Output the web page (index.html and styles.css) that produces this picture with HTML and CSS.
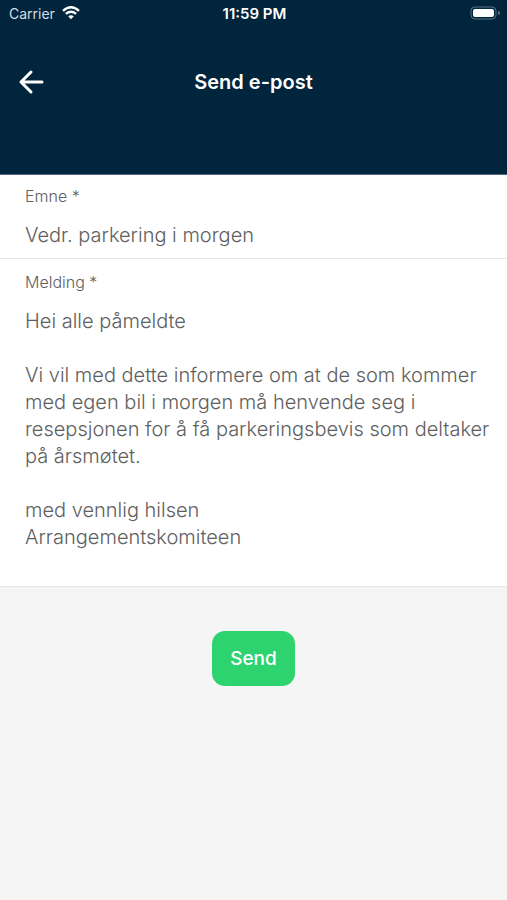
FILE: index.html
```html
<!DOCTYPE html>
<html lang="nb">
<head>
<meta charset="utf-8">
<meta name="viewport" content="width=device-width, initial-scale=1">
<title>Send e-post</title>
<link rel="stylesheet" href="styles.css">
</head>
<body>
<header class="header">
  <div class="status">
    <div class="status-left">
      <span>Carrier</span>
      <svg class="wifi" viewBox="0 0 18 14" aria-hidden="true">
        <path d="M1 4.8Q9-2.2 17 4.8M3.8 7.9Q9 3.6 14.2 7.9"/>
        <path class="wifi-dot" d="M6.2 10.3Q9 8.4 11.8 10.3L9 13.3Z"/>
      </svg>
    </div>
    <time class="clock">11:59 PM</time>
    <svg class="battery" viewBox="0 0 30 14" aria-hidden="true">
      <rect class="battery-case" x="1" y="1" width="25" height="12" rx="4"/>
      <rect class="battery-fill" x="3" y="3" width="21" height="8" rx="2"/>
      <path class="battery-tip" d="M28 5Q30 5 30 7Q30 9 28 9Z"/>
    </svg>
  </div>
  <nav class="navbar">
    <button class="back" type="button" aria-label="Tilbake">
      <svg viewBox="0 0 26 26" aria-hidden="true"><path d="M13 3L3 13L13 23M3 13H24"/></svg>
    </button>
    <h1 class="title">Send e-post</h1>
  </nav>
</header>
<main>
  <form class="form">
    <div class="field">
      <label class="label" for="subject">Emne *</label>
      <input class="control" id="subject" type="text" value="Vedr. parkering i morgen">
    </div>
    <div class="field field-message">
      <label class="label" for="message">Melding *</label>
      <textarea class="control message" id="message" rows="9">Hei alle påmeldte

Vi vil med dette informere om at de som kommer med egen bil i morgen må henvende seg i resepsjonen for å få parkeringsbevis som deltaker på årsmøtet.

med vennlig hilsen
Arrangementskomiteen</textarea>
    </div>
    <button class="send" type="button">Send</button>
  </form>
</main>
</body>
</html>
```
FILE: styles.css
```css
* {
  box-sizing: border-box;
}

body {
  margin: 0;
  min-height: 100vh;
  background: #f5f5f5;
  color: #606060;
  font-family: Inter, "Liberation Sans", sans-serif;
}

.header {
  padding-bottom: 64px;
  border-bottom: 1px solid #526581;
  background: #00253d;
  color: #fff;
}

.status {
  display: grid;
  grid-template-columns: 1fr auto 1fr;
  align-items: center;
  height: 26px;
  padding: 0 7px 0 9px;
  font-size: 14px;
}

.status-left {
  display: flex;
  align-items: center;
  gap: 7px;
  color: #d5dee5;
}

.clock {
  font-size: 15px;
  font-weight: 600;
}

.wifi {
  width: 18px;
  height: 14px;
  fill: none;
  stroke: #fff;
  stroke-width: 2.4;
}

.wifi-dot {
  fill: #fff;
  stroke: none;
}

.battery {
  justify-self: end;
  width: 30px;
  height: 14px;
}

.battery-case {
  fill: none;
  stroke: #587184;
}

.battery-fill {
  fill: #fff;
}

.battery-tip {
  fill: #587184;
}

.navbar {
  display: grid;
  grid-template-columns: 1fr auto 1fr;
  align-items: center;
  height: 84px;
  padding: 28px 18px 0;
}

.back {
  justify-self: start;
  width: 26px;
  height: 26px;
  padding: 0;
  border: 0;
  background: none;
}

.back svg {
  display: block;
  fill: none;
  stroke: #fff;
  stroke-width: 3;
  stroke-linecap: round;
  stroke-linejoin: round;
}

.title {
  margin: 0;
  font-size: 20px;
  font-weight: 600;
}

.form {
  display: flex;
  flex-direction: column;
}

.field {
  display: flex;
  flex-direction: column;
  gap: 16px;
  padding: 11px 16px 9px 25px;
  border-bottom: 1px solid #e6e6e6;
  background: #fff;
}

.field-message {
  padding-top: 13px;
}

.label {
  font-size: 16px;
  font-weight: 300;
  line-height: 20px;
}

.control {
  display: block;
  width: 100%;
  height: 27px;
  margin: 0;
  padding: 0;
  border: 0;
  outline: 0;
  background: none;
  color: inherit;
  font: 300 20px/27px Inter, "Liberation Sans", sans-serif;
}

.message {
  height: 269px;
  overflow: hidden;
  resize: none;
}

.send {
  align-self: center;
  margin: 44px 0;
  padding: 14px 18px;
  border: 0;
  border-radius: 13px;
  background: #2dd36f;
  color: #fff;
  font: 500 19px/27px Inter, "Liberation Sans", sans-serif;
}
```
